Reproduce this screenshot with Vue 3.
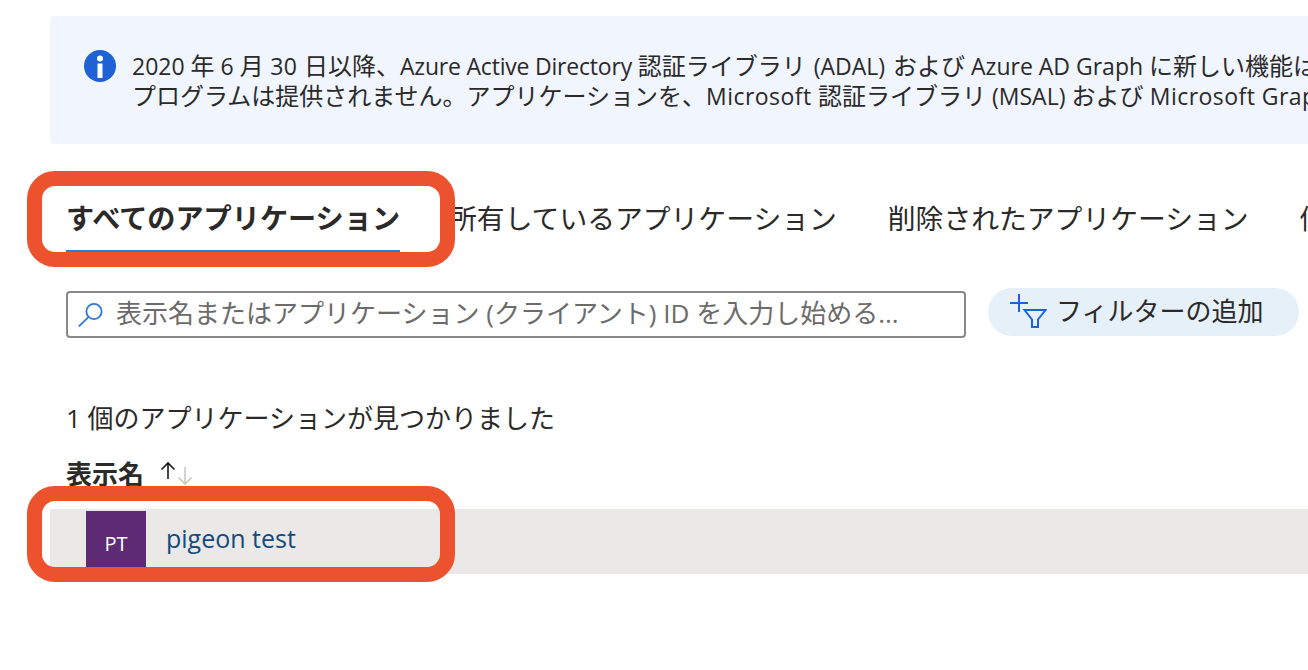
<script setup>
const tabs = ['すべてのアプリケーション', '所有しているアプリケーション', '削除されたアプリケーション', '個人用アカウントのアプリケーション']
</script>

<template>
  <div class="page">
    <section class="banner">
      <svg class="info" width="32" height="32" viewBox="0 0 32 32">
        <circle cx="16" cy="16" r="16" fill="#1f62d6" />
        <circle cx="16" cy="8.5" r="3" fill="#fff" />
        <rect x="13.5" y="13.5" width="5" height="14.5" fill="#fff" />
      </svg>
      <p class="banner-text">
        <span class="line"><span class="lat">2020 </span>年<span class="lat"> 6 </span>月<span class="lat thirty"> 30 </span>日以降、<span class="lat tight">Azure Active Directory </span>認証ライブラリ<span class="lat adal"> (ADAL) </span>および<span class="lat"> Azure AD Graph </span>に新しい機能は追加されません。</span>
        <span class="line">プログラムは提供されません。アプリケーションを、<span class="lat ms">Microsoft </span>認証ライブラリ<span class="lat"> (MSAL) </span>および<span class="lat ms"> Microsoft Graph </span>に更新してください。</span>
      </p>
    </section>

    <nav class="tabs">
      <div v-for="(t, i) in tabs" :key="t" class="tab" :class="{ active: i === 0 }">{{ t }}</div>
    </nav>

    <div class="toolbar">
      <div class="search">
        <svg width="28" height="28" viewBox="0 0 28 28" fill="none" stroke="#2f78d8" stroke-width="1.8">
          <circle cx="16" cy="12.5" r="7.6" />
          <path d="M10.4 18.2 L0.8 27.4" />
        </svg>
        <span class="placeholder">表示名またはアプリケーション (クライアント) ID を入力し始める...</span>
      </div>
      <button class="filter">
        <svg width="38" height="36" viewBox="0 0 38 36" fill="none" stroke="#1f62d6" stroke-width="2">
          <path d="M1 9 H19 M10 0 V18" />
          <path d="M15.5 16 H36.5 L29 25.5 V33 H23 V25.5 Z" />
        </svg>
        <span class="filter-label">フィルターの追加</span>
      </button>
    </div>

    <p class="count">1 個のアプリケーションが見つかりました</p>

    <div class="head">
      <strong>表示名</strong>
      <svg class="sort" width="34" height="26" viewBox="0 0 34 26" fill="none" stroke-width="1.6">
        <path d="M8 18 V2 M1.5 8.5 L8 2 L14.5 8.5" stroke="#1a1a1a" />
        <path d="M25 6 V23 M18.5 16.5 L25 23 L31.5 16.5" stroke="#c8c8c8" />
      </svg>
    </div>

    <div class="row">
      <div class="avatar">PT</div>
      <a class="name">pigeon test</a>
    </div>

    <div class="mark mark-tab"></div>
    <div class="mark mark-row"></div>
  </div>
</template>

<style scoped>
.page {
  position: relative;
  width: 1308px;
  height: 670px;
  overflow: hidden;
  background: #fff;
  color: #2b2a29;
  font-family: "Open Sans", "Noto Sans CJK JP", sans-serif;
  padding: 16px 0 0 50px;
  box-sizing: border-box;
}
.banner {
  width: 1400px;
  height: 128px;
  background: #f0f5fe;
  border-radius: 3px;
  display: flex;
  align-items: flex-start;
  padding: 34px 0 0 34px;
  box-sizing: border-box;
  gap: 16px;
}
.info { flex: none; }
.banner-text {
  margin: 1px 0 0;
  font-size: 24px;
  line-height: 30px;
  white-space: nowrap;
}
.line { display: block; }
.lat { font-size: 23px; }
.thirty { letter-spacing: 0.5px; }
.tight { letter-spacing: -0.2px; }
.adal { word-spacing: 2px; }
.ms { letter-spacing: 0.45px; }
.tabs {
  display: flex;
  margin: 52px 0 0 16px;
  gap: 51px;
  white-space: nowrap;
}
.tab {
  font-size: 27.8px;
  line-height: 44px;
  height: 56px;
  box-sizing: border-box;
}
.tab.active {
  font-size: 28.15px;
  font-weight: 700;
  border-bottom: 2px solid #2f78d8;
  margin-right: -2px;
}
.toolbar {
  display: flex;
  align-items: flex-start;
  margin: 36px 0 0 16px;
  gap: 22px;
}
.search {
  width: 900px;
  height: 47px;
  margin-top: 3px;
  border: 2px solid #8a8886;
  border-radius: 4px;
  box-sizing: border-box;
  display: flex;
  align-items: center;
  padding: 0 0 4px 10px;
  gap: 10px;
}
.search svg { flex: none; }
.placeholder {
  font-size: 26px;
  color: #6c6b6a;
  white-space: nowrap;
  margin-bottom: 2px;
}
.filter {
  height: 48px;
  width: 311px;
  border: 0;
  border-radius: 24px;
  background: #e6f0f9;
  display: flex;
  align-items: center;
  padding: 0 0 0 21px;
  gap: 9px;
  font: inherit;
  font-size: 26px;
  color: #2b2a29;
  white-space: nowrap;
}
.filter svg { flex: none; }
.filter-label { margin-bottom: 4px; }
.count {
  margin: 62px 0 0 16px;
  font-size: 26px;
  line-height: 36px;
  white-space: nowrap;
}
.head {
  margin: 19px 0 0 16px;
  height: 36px;
  display: flex;
  align-items: center;
  font-size: 26px;
}
.head strong { margin-right: 16px; }
.sort { margin-top: 2px; flex: none; }
.row {
  margin-top: 18px;
  width: 1300px;
  height: 65px;
  background: #ebe9e8;
  display: flex;
  align-items: flex-start;
  padding: 2px 0 0 36px;
  box-sizing: border-box;
  gap: 20px;
}
.avatar {
  width: 60px;
  height: 60px;
  background: #5f2a74;
  color: #fff;
  font-size: 20px;
  font-weight: 500;
  display: flex;
  align-items: center;
  justify-content: center;
  padding-top: 4px;
  box-sizing: border-box;
}
.name {
  font-size: 25px;
  line-height: 55px;
  color: #154a7d;
}
.mark {
  position: absolute;
  left: 27px;
  width: 428px;
  height: 96px;
  box-sizing: border-box;
  border: 15px solid #ec522d;
  border-radius: 28px;
}
.mark-tab { top: 171px; }
.mark-row { top: 486px; }
</style>

<style>
html, body { margin: 0; overflow: hidden; }
</style>
